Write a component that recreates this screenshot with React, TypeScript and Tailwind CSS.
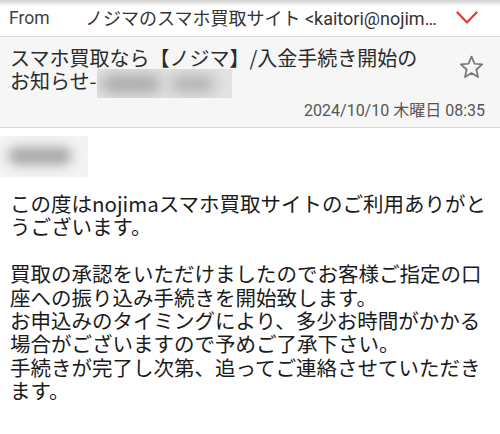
import React from "react";

const jp = { fontFamily: '"Noto Sans CJK JP", "Noto Sans", sans-serif' };
const ui = { fontFamily: 'Roboto, "Noto Sans CJK JP", sans-serif' };

function Chevron() {
  return (
    <svg width="22" height="14" viewBox="0 0 22 14" fill="none">
      <path d="M1.5 1.5 L11 11.5 L20.5 1.5" stroke="#e53935" strokeWidth="2.2" strokeLinecap="round" strokeLinejoin="round" />
    </svg>
  );
}

function Star() {
  return (
    <svg width="27" height="26" viewBox="0 0 24 24" fill="none">
      <path
        d="M12 2.4 L14.8 9 L21.9 9.6 L16.5 14.3 L18.1 21.3 L12 17.6 L5.9 21.3 L7.5 14.3 L2.1 9.6 L9.2 9 Z"
        stroke="#777"
        strokeWidth="1.6"
        strokeLinejoin="round"
      />
    </svg>
  );
}

export default function App() {
  return (
    <div className="w-[500px] h-[434px] overflow-hidden bg-white text-[#212121]">
      <div className="relative flex items-center h-[37px] border-b border-[#dcdcdc] bg-white">
        <div className="absolute top-0 left-0 right-0 h-[6px] bg-gradient-to-b from-[#cfcfcf] to-transparent" />
        <span className="pl-[9px] w-[85px] shrink-0 text-[17.5px] text-[#424242]" style={ui}>
          From
        </span>
        <span className="w-[358px] truncate text-[18px] text-[#333]" style={ui}>
          ノジマのスマホ買取サイト &lt;kaitori@nojima.co.jp&gt;
        </span>
        <span className="ml-[13px] flex items-center">
          <Chevron />
        </span>
      </div>

      <div className="bg-[#f6f6f6] border-b border-[#dadada] pt-[9px] pb-[6px] pl-[10px] pr-[15px]">
        <div className="flex items-start">
          <div className="flex-1 text-[20px] leading-[23px] text-[#2b2b2b]" style={jp}>
            スマホ買取なら【ノジマ】/入金手続き開始の
            <br />
            お知らせ-
            <span className="relative inline-block align-top w-[135px] h-[29px] bg-[#e2e2e2] overflow-hidden">
              <span className="absolute left-[4px] top-[6px] w-[60px] h-[18px] rounded-full bg-[#aaaaaa] blur-[7px]" />
              <span className="absolute left-[74px] top-[6px] w-[44px] h-[18px] rounded-full bg-[#b3b3b3] blur-[7px]" />
            </span>
          </div>
          <div className="mt-[8px] ml-[5px]">
            <Star />
          </div>
        </div>
        <div className="text-right text-[16px] leading-[20px] text-[#555] mt-[3px]" style={ui}>
          2024/10/10 木曜日 08:35
        </div>
      </div>

      <div className="pt-[8px]">
        <div className="relative w-[88px] h-[41px] bg-[#f3f3f3] overflow-hidden">
          <span className="absolute left-[8px] top-[11px] w-[64px] h-[18px] rounded-full bg-[#a8a8a8] blur-[6px]" />
        </div>
        <div className="mt-[15px] px-[10px] text-[20.5px] leading-[23.4px] text-[#1a1a1a]" style={jp}>
          <p>この度はnojimaスマホ買取サイトのご利用ありがとうございます。</p>
          <p>&nbsp;</p>
          <p>
            買取の承認をいただけましたのでお客様ご指定の口座への振り込み手続きを開始致します。
            <br />
            お申込みのタイミングにより、多少お時間がかかる場合がございますので予めご了承下さい。
            <br />
            手続きが完了し次第、追ってご連絡させていただきます。
          </p>
        </div>
      </div>
    </div>
  );
}
